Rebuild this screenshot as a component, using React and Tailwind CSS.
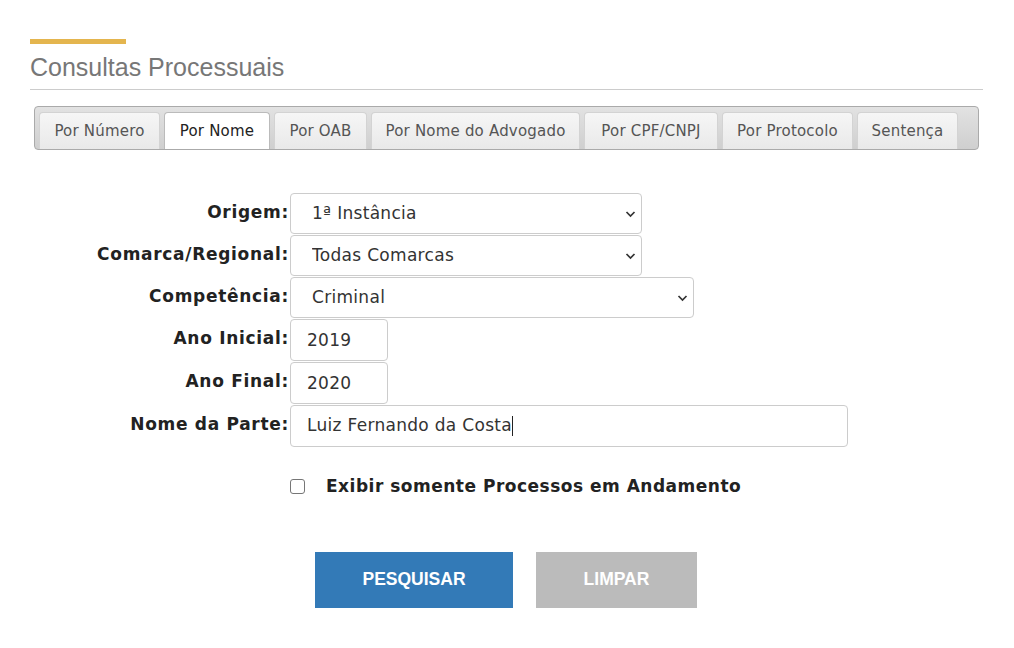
import React, { useState } from 'react';

const tabs = [
    { label: 'Por Número', w: 'w-[121px]' },
    { label: 'Por Nome', w: 'w-[106px]' },
    { label: 'Por OAB', w: 'w-[93px]' },
    { label: 'Por Nome do Advogado', w: 'w-[209px]' },
    { label: 'Por CPF/CNPJ', w: 'w-[134px]' },
    { label: 'Por Protocolo', w: 'w-[131px]' },
    { label: 'Sentença', w: 'w-[101px]' },
];

function Chevron() {
    return (
        <svg width="11" height="8" viewBox="0 0 11 8" className="pointer-events-none absolute right-[6px] top-1/2 -translate-y-1/2">
            <path d="M1.5 2l4 4 4-4" fill="none" stroke="#333" strokeWidth="1.7" />
        </svg>
    );
}

function Row({ label, children }) {
    return (
        <div className="flex items-start">
            <label className="w-[260px] shrink-0 pr-[1px] pt-[7px] text-right text-[17px] font-bold tracking-[0.7px] text-[#222]">{label}</label>
            {children}
        </div>
    );
}

function Select({ value, width }) {
    return (
        <div className={`relative ${width} h-[41px]`}>
            <select
                defaultValue={value}
                className="h-full w-full appearance-none rounded-[4px] border border-[#ccc] bg-white pl-[21px] text-[17px] tracking-[0.3px] text-[#333] outline-none"
            >
                <option>{value}</option>
            </select>
            <Chevron />
        </div>
    );
}

export default function App() {
    const [active] = useState(1);

    return (
        <div className="min-h-[648px] w-[1014px] bg-white px-[30px] pt-[39px]" style={{ fontFamily: '"DejaVu Sans", Verdana, sans-serif' }}>
            <div className="h-[5px] w-[96px] bg-[#e4b54e]" />
            <h1 className="mt-[8px] text-[25px] leading-[30px] text-[#777]" style={{ fontFamily: '"Liberation Sans", Arial, sans-serif' }}>
                Consultas Processuais
            </h1>
            <div className="mt-[7px] h-px w-[953px] bg-[#ccc]" />

            {/* abas */}
            <div className="ml-[4px] mt-[16px] flex h-[44px] w-[945px] items-end gap-[4px] rounded-[4px] border border-[#aaa] bg-gradient-to-b from-[#e2e2e2] to-[#cfcfcf] pl-[4px]">
                {tabs.map((t, i) => (
                    <div
                        key={t.label}
                        className={`flex h-[37px] ${t.w} items-center justify-center rounded-t-[4px] border border-b-0 text-[15px] tracking-[0.2px] ${
                            i === active
                                ? 'border-[#bbb] bg-white text-[#222]'
                                : 'border-[#d3d3d3] bg-gradient-to-b from-[#f6f6f6] to-[#e9e9e9] text-[#555]'
                        }`}
                    >
                        {t.label}
                    </div>
                ))}
            </div>

            <form className="mt-[43px] flex flex-col gap-[1px]">
                <Row label="Origem:">
                    <Select value="1ª Instância" width="w-[352px]" />
                </Row>
                <Row label="Comarca/Regional:">
                    <Select value="Todas Comarcas" width="w-[352px]" />
                </Row>
                <Row label="Competência:">
                    <Select value="Criminal" width="w-[404px]" />
                </Row>
                <Row label="Ano Inicial:">
                    <input defaultValue="2019" className="h-[42px] w-[98px] rounded-[4px] border border-[#ccc] pl-[16px] text-[17px] tracking-[0.3px] text-[#333] outline-none" />
                </Row>
                <Row label="Ano Final:">
                    <input defaultValue="2020" className="h-[42px] w-[98px] rounded-[4px] border border-[#ccc] pl-[16px] text-[17px] tracking-[0.3px] text-[#333] outline-none" />
                </Row>
                <Row label="Nome da Parte:">
                    <div className="flex h-[42px] w-[558px] items-center rounded-[4px] border border-[#ccc] pl-[16px] text-[17px] tracking-[0.3px] text-[#333]">
                        Luiz Fernando da Costa<span className="inline-block h-[20px] w-px bg-[#222]" />
                    </div>
                </Row>

                <div className="mt-[26px] flex items-center pl-[260px]">
                    <input type="checkbox" className="h-[15px] w-[15px] appearance-none rounded-[3px] border border-[#767676] bg-white" />
                    <span className="ml-[21px] text-[17px] font-bold tracking-[0.5px] text-[#222]">Exibir somente Processos em Andamento</span>
                </div>

                <div className="mt-[51px] flex gap-[23px] pl-[285px]" style={{ fontFamily: '"Liberation Sans", Arial, sans-serif' }}>
                    <button type="button" className="h-[56px] w-[198px] bg-[#337ab7] text-[17.5px] font-bold text-white">PESQUISAR</button>
                    <button type="button" className="h-[56px] w-[161px] bg-[#bbb] text-[17.5px] font-bold text-white">LIMPAR</button>
                </div>
            </form>
        </div>
    );
}
